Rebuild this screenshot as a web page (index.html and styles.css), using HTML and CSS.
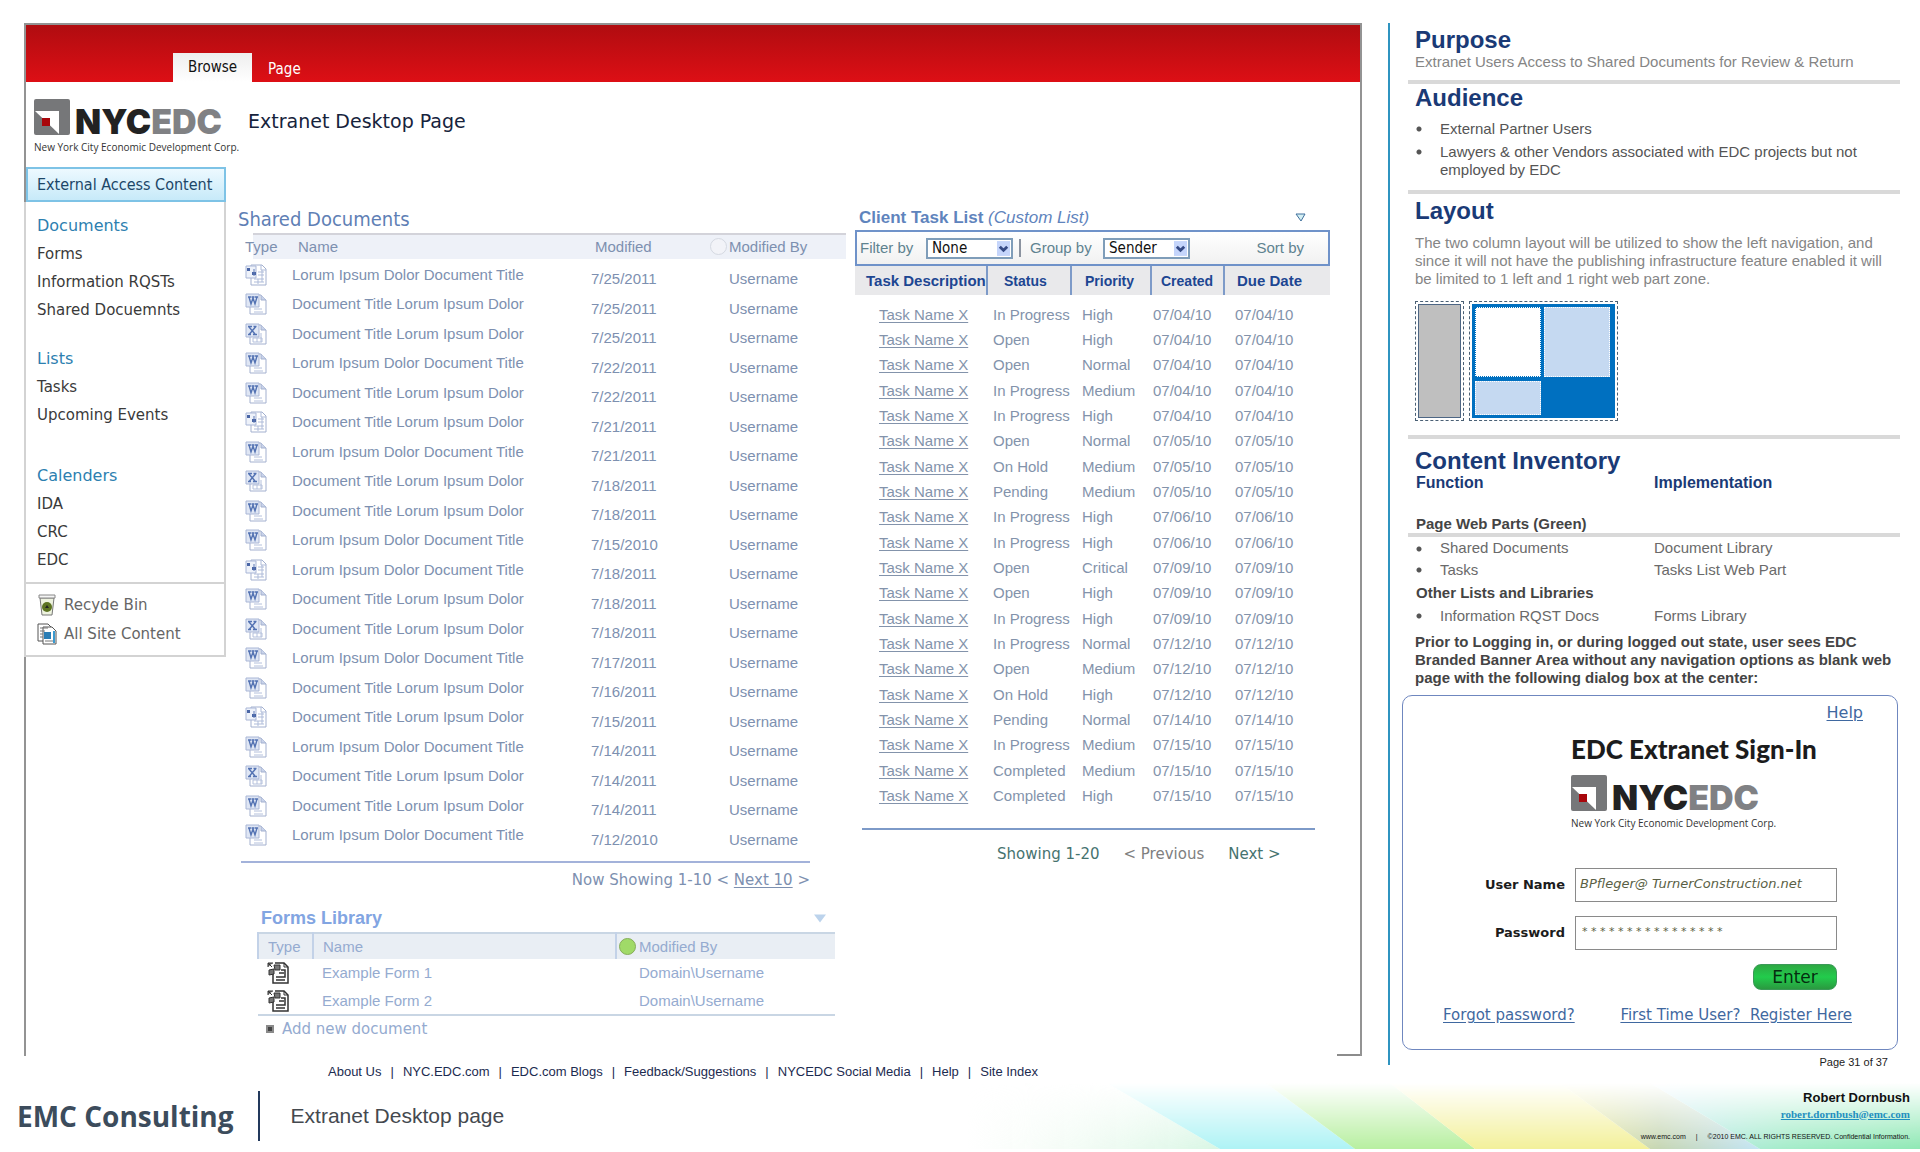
FILE: index.html
```html
<!DOCTYPE html>
<html lang="en">
<head>
<meta charset="utf-8">
<title>Extranet Desktop Page</title>
<link rel="stylesheet" href="styles.css">
</head>
<body>
<svg class="sprite" aria-hidden="true">
  <symbol id="i-word" viewBox="0 0 22 22">
    <path d="M5 2h11l5 5v14H5z" fill="#fff" stroke="#a3b0cf"/><path d="M16 2v5h5" fill="#c9d3ea" stroke="#a3b0cf"/>
    <path d="M9 16h8M9 19h9" stroke="#b4c0dc"/><path d="M1 1h13v13H1z" fill="#dfe6f4" stroke="#a9b6d6"/>
    <path d="M3 4h3M6.500 4h3M10 4h3M4 4l2 7 2-6 2 6 2-7" fill="none" stroke="#5473b3" stroke-width="1.400"/>
  </symbol>
  <symbol id="i-excel" viewBox="0 0 22 22">
    <path d="M5 2h11l5 5v14H5z" fill="#fff" stroke="#a3b0cf"/><path d="M16 2v5h5" fill="#c9d3ea" stroke="#a3b0cf"/>
    <path d="M8 15h9v4H8zM16 10v9M12 15v4" fill="none" stroke="#b4c0dc"/><path d="M1 1h13v13H1z" fill="#dfe6f4" stroke="#a9b6d6"/>
    <path d="M3 3.500h4M8.500 3.500h3M3 11.500h3M8 11.500h4M4 4l6 7M10.500 4l-6 7" fill="none" stroke="#5473b3" stroke-width="1.400"/>
  </symbol>
  <symbol id="i-info" viewBox="0 0 22 22">
    <path d="M6 1h11l4 4v16H6z" fill="#fff" stroke="#a3b0cf"/><path d="M16 1v5h5M13 8h6M13 11h6M9 15h10M9 18h10M13 15v5M17 6v12" fill="none" stroke="#aebbd9"/>
    <path d="M1 2h10v12H1z" fill="#eef2fa" stroke="#a9b6d6"/><path d="M2 4h3v3H2zM7 8h4v3H7z" fill="#4a66a6"/><path d="M9 5v7" stroke="#5d78b5"/>
  </symbol>
  <symbol id="i-form" viewBox="0 0 22 22">
    <path d="M8 1h9l4 4v16H6V12" fill="#fff" stroke="#333" stroke-width="1.500"/><path d="M17 1v4h4" fill="none" stroke="#333"/>
    <path d="M9 18h9M9 15h9V8h-4M12 11h5" fill="none" stroke="#333" stroke-width="1.500"/>
    <path d="M1 5V1h5M1 1l4 4M2 8l5-1v5l-5 1zM7 3h6v5H8z" fill="#777" stroke="#333"/>
  </symbol>
  <symbol id="i-logo" viewBox="0 0 36 36">
    <path d="M0 2Q0 0 2 0H34Q36 0 36 2V34Q36 36 34 36H2Q0 36 0 34Z" fill="#767779"/>
    <path d="M1 12H25V35Z" fill="#fff"/><path d="M8 19h8v8H8z" fill="#a8060b"/>
  </symbol>
</svg>

<div class="board">
  <div class="left">
    <div class="frame">
      <header class="ribbon"><a class="tab active" href="#">Browse</a><a class="tab" href="#">Page</a></header>
      <div class="masthead">
        <div class="logo">
          <div class="logo-top"><svg class="mark"><use href="#i-logo"/></svg><span class="word">NYC<span>EDC</span></span></div>
          <div class="tagline">New York City Economic Development Corp.</div>
        </div>
        <h1>Extranet Desktop Page</h1>
      </div>
      <div class="columns">
        <nav class="sidebar">
          <a class="current" href="#">External Access Content</a>
          <div class="groups">
            <h3>Documents</h3>
            <ul><li><a href="#">Forms</a></li><li><a href="#">Information RQSTs</a></li><li><a href="#">Shared Docuemnts</a></li></ul>
            <h3>Lists</h3>
            <ul class="short"><li><a href="#">Tasks</a></li><li><a href="#">Upcoming Events</a></li></ul>
            <h3>Calenders</h3>
            <ul><li><a href="#">IDA</a></li><li><a href="#">CRC</a></li><li><a href="#">EDC</a></li></ul>
          </div>
          <div class="tools">
            <a href="#"><svg class="tool" viewBox="0 0 20 22"><path d="M3 4h14l-2 17H5z" fill="#eef3df" stroke="#777"/><path d="M2 1h16v3H2z" fill="#f5f5f5" stroke="#888"/><circle cx="10" cy="13" r="5" fill="#5d7422"/><path d="M8 14l2-3 2 3z" fill="#222"/></svg>Recyde Bin</a>
            <a href="#"><svg class="tool" viewBox="0 0 20 22"><path d="M1 1h10l3 3v14H1z" fill="#fff" stroke="#555"/><path d="M6 4h9l4 4v13H6z" fill="#fff" stroke="#555"/><path d="M3 5h8M3 8h5M3 11h3M3 14h3M8 18h8" stroke="#777"/><path d="M7 9h7v7H7z" fill="#2b7db4"/><path d="M17 8v12" stroke="#3a9ad0" stroke-width="2"/></svg>All Site Content</a>
          </div>
        </nav>

        <div class="documents">
          <section>
            <h2>Shared Documents</h2>
            <table class="docs">
              <thead><tr><th>Type</th><th>Name</th><th>Modified<span class="dot"></span></th><th>Modified By</th></tr></thead>
              <tbody>
                <tr><td><svg><use href="#i-info"/></svg></td><td>Lorum Ipsum Dolor Document Title</td><td>7/25/2011</td><td>Username</td></tr>
                <tr><td><svg><use href="#i-word"/></svg></td><td>Document Title Lorum Ipsum Dolor</td><td>7/25/2011</td><td>Username</td></tr>
                <tr><td><svg><use href="#i-excel"/></svg></td><td>Document Title Lorum Ipsum Dolor</td><td>7/25/2011</td><td>Username</td></tr>
                <tr><td><svg><use href="#i-word"/></svg></td><td>Lorum Ipsum Dolor Document Title</td><td>7/22/2011</td><td>Username</td></tr>
                <tr><td><svg><use href="#i-word"/></svg></td><td>Document Title Lorum Ipsum Dolor</td><td>7/22/2011</td><td>Username</td></tr>
                <tr><td><svg><use href="#i-info"/></svg></td><td>Document Title Lorum Ipsum Dolor</td><td>7/21/2011</td><td>Username</td></tr>
                <tr><td><svg><use href="#i-word"/></svg></td><td>Lorum Ipsum Dolor Document Title</td><td>7/21/2011</td><td>Username</td></tr>
                <tr><td><svg><use href="#i-excel"/></svg></td><td>Document Title Lorum Ipsum Dolor</td><td>7/18/2011</td><td>Username</td></tr>
                <tr><td><svg><use href="#i-word"/></svg></td><td>Document Title Lorum Ipsum Dolor</td><td>7/18/2011</td><td>Username</td></tr>
                <tr><td><svg><use href="#i-word"/></svg></td><td>Lorum Ipsum Dolor Document Title</td><td>7/15/2010</td><td>Username</td></tr>
                <tr><td><svg><use href="#i-info"/></svg></td><td>Lorum Ipsum Dolor Document Title</td><td>7/18/2011</td><td>Username</td></tr>
                <tr><td><svg><use href="#i-word"/></svg></td><td>Document Title Lorum Ipsum Dolor</td><td>7/18/2011</td><td>Username</td></tr>
                <tr><td><svg><use href="#i-excel"/></svg></td><td>Document Title Lorum Ipsum Dolor</td><td>7/18/2011</td><td>Username</td></tr>
                <tr><td><svg><use href="#i-word"/></svg></td><td>Lorum Ipsum Dolor Document Title</td><td>7/17/2011</td><td>Username</td></tr>
                <tr><td><svg><use href="#i-word"/></svg></td><td>Document Title Lorum Ipsum Dolor</td><td>7/16/2011</td><td>Username</td></tr>
                <tr><td><svg><use href="#i-info"/></svg></td><td>Document Title Lorum Ipsum Dolor</td><td>7/15/2011</td><td>Username</td></tr>
                <tr><td><svg><use href="#i-word"/></svg></td><td>Lorum Ipsum Dolor Document Title</td><td>7/14/2011</td><td>Username</td></tr>
                <tr><td><svg><use href="#i-excel"/></svg></td><td>Document Title Lorum Ipsum Dolor</td><td>7/14/2011</td><td>Username</td></tr>
                <tr><td><svg><use href="#i-word"/></svg></td><td>Document Title Lorum Ipsum Dolor</td><td>7/14/2011</td><td>Username</td></tr>
                <tr><td><svg><use href="#i-word"/></svg></td><td>Lorum Ipsum Dolor Document Title</td><td>7/12/2010</td><td>Username</td></tr>
              </tbody>
            </table>
            <div class="docs-pager">Now Showing 1-10 &lt; <a href="#">Next 10</a> &gt;</div>
          </section>
          <section class="forms">
            <h2>Forms Library<svg class="caret" viewBox="0 0 12 8"><path d="M0 0h12L6 8z" fill="#bcd3ec"/></svg></h2>
            <table>
              <thead><tr><th>Type</th><th>Name</th><th><span class="status"></span>Modified By</th></tr></thead>
              <tbody>
                <tr><td><svg><use href="#i-form"/></svg></td><td>Example Form 1</td><td>Domain\Username</td></tr>
                <tr><td><svg><use href="#i-form"/></svg></td><td>Example Form 2</td><td>Domain\Username</td></tr>
              </tbody>
            </table>
            <a class="add" href="#"><svg viewBox="0 0 8 8"><path d="M0 0h8v8H0z" fill="#8a8a8a"/><path d="M2 2h4v4H2z" fill="#444"/></svg>Add new document</a>
          </section>
        </div>

        <section class="tasks">
          <h2>Client Task List <em>(Custom List)</em><svg class="caret" viewBox="0 0 12 9"><path d="M1 1h9L6 8z" fill="#d5f0f4" stroke="#3f6f9c"/></svg></h2>
          <div class="filters">
            <label for="filter">Filter by</label>
            <span class="pick"><select id="filter"><option>None</option></select><svg viewBox="0 0 14 16"><path d="M0 0h14v16H0z" fill="#c5d5fb"/><path d="M3 6l4 4 4-4" fill="none" stroke="#354a85" stroke-width="3"/></svg></span>
            <label class="group" for="group">Group by</label>
            <span class="pick"><select id="group"><option>Sender</option></select><svg viewBox="0 0 14 16"><path d="M0 0h14v16H0z" fill="#c5d5fb"/><path d="M3 6l4 4 4-4" fill="none" stroke="#354a85" stroke-width="3"/></svg></span>
            <span class="sort">Sort by</span>
          </div>
          <table>
            <thead><tr><th>Task Description</th><th>Status</th><th>Priority</th><th>Created</th><th>Due Date</th></tr></thead>
            <tbody>
              <tr><td><a href="#">Task Name X</a></td><td>In Progress</td><td>High</td><td>07/04/10</td><td>07/04/10</td></tr>
              <tr><td><a href="#">Task Name X</a></td><td>Open</td><td>High</td><td>07/04/10</td><td>07/04/10</td></tr>
              <tr><td><a href="#">Task Name X</a></td><td>Open</td><td>Normal</td><td>07/04/10</td><td>07/04/10</td></tr>
              <tr><td><a href="#">Task Name X</a></td><td>In Progress</td><td>Medium</td><td>07/04/10</td><td>07/04/10</td></tr>
              <tr><td><a href="#">Task Name X</a></td><td>In Progress</td><td>High</td><td>07/04/10</td><td>07/04/10</td></tr>
              <tr><td><a href="#">Task Name X</a></td><td>Open</td><td>Normal</td><td>07/05/10</td><td>07/05/10</td></tr>
              <tr><td><a href="#">Task Name X</a></td><td>On Hold</td><td>Medium</td><td>07/05/10</td><td>07/05/10</td></tr>
              <tr><td><a href="#">Task Name X</a></td><td>Pending</td><td>Medium</td><td>07/05/10</td><td>07/05/10</td></tr>
              <tr><td><a href="#">Task Name X</a></td><td>In Progress</td><td>High</td><td>07/06/10</td><td>07/06/10</td></tr>
              <tr><td><a href="#">Task Name X</a></td><td>In Progress</td><td>High</td><td>07/06/10</td><td>07/06/10</td></tr>
              <tr><td><a href="#">Task Name X</a></td><td>Open</td><td>Critical</td><td>07/09/10</td><td>07/09/10</td></tr>
              <tr><td><a href="#">Task Name X</a></td><td>Open</td><td>High</td><td>07/09/10</td><td>07/09/10</td></tr>
              <tr><td><a href="#">Task Name X</a></td><td>In Progress</td><td>High</td><td>07/09/10</td><td>07/09/10</td></tr>
              <tr><td><a href="#">Task Name X</a></td><td>In Progress</td><td>Normal</td><td>07/12/10</td><td>07/12/10</td></tr>
              <tr><td><a href="#">Task Name X</a></td><td>Open</td><td>Medium</td><td>07/12/10</td><td>07/12/10</td></tr>
              <tr><td><a href="#">Task Name X</a></td><td>On Hold</td><td>High</td><td>07/12/10</td><td>07/12/10</td></tr>
              <tr><td><a href="#">Task Name X</a></td><td>Pending</td><td>Normal</td><td>07/14/10</td><td>07/14/10</td></tr>
              <tr><td><a href="#">Task Name X</a></td><td>In Progress</td><td>Medium</td><td>07/15/10</td><td>07/15/10</td></tr>
              <tr><td><a href="#">Task Name X</a></td><td>Completed</td><td>Medium</td><td>07/15/10</td><td>07/15/10</td></tr>
              <tr><td><a href="#">Task Name X</a></td><td>Completed</td><td>High</td><td>07/15/10</td><td>07/15/10</td></tr>
            </tbody>
          </table>
          <div class="task-pager"><span>Showing 1-20</span><a class="prev" href="#">&lt; Previous</a><a href="#">Next &gt;</a></div>
        </section>
      </div>
    </div>
    <nav class="site-links"><a href="#">About Us</a><i>|</i><a href="#">NYC.EDC.com</a><i>|</i><a href="#">EDC.com Blogs</a><i>|</i><a href="#">Feedback/Suggestions</a><i>|</i><a href="#">NYCEDC Social Media</a><i>|</i><a href="#">Help</a><i>|</i><a href="#">Site Index</a></nav>
  </div>

  <aside class="notes">
    <div class="rail">
      <section class="purpose"><h2>Purpose</h2><p>Extranet Users Access to Shared Documents for Review &amp; Return</p></section>
      <section class="audience"><h2>Audience</h2>
        <ul><li>External Partner Users</li><li>Lawyers &amp; other Vendors associated with EDC projects but not employed by EDC</li></ul></section>
      <section class="layout"><h2>Layout</h2>
        <p>The two column layout will be utilized to show the left navigation, and since it will not have the publishing infrastructure feature enabled it will be limited to 1 left and 1 right web part zone.</p>
        <div class="diagram"><div class="zone narrow"><div></div></div><div class="zone wide"><div class="cells"><b class="white"></b><b></b><b></b><b class="solid"></b></div></div></div>
      </section>
      <section class="inventory"><h2>Content Inventory</h2>
        <table>
          <thead><tr><th>Function</th><th>Implementation</th></tr></thead>
          <tbody>
            <tr class="parts"><th colspan="2">Page Web Parts (Green)</th></tr>
            <tr><td class="item">Shared Documents</td><td>Document Library</td></tr>
            <tr><td class="item">Tasks</td><td>Tasks List Web Part</td></tr>
            <tr><th colspan="2">Other Lists and Libraries</th></tr>
            <tr><td class="item">Information RQST Docs</td><td>Forms Library</td></tr>
          </tbody>
        </table>
        <p>Prior to Logging in, or during logged out state, user sees EDC Branded Banner Area without any navigation options as blank web page with the following dialog box at the center:</p>
      </section>
      <form class="dialog">
        <a class="help" href="#">Help</a>
        <h2>EDC Extranet Sign-In</h2>
        <div class="logo">
          <div class="logo-top"><svg class="mark"><use href="#i-logo"/></svg><span class="word">NYC<span>EDC</span></span></div>
          <div class="tagline">New York City Economic Development Corp.</div>
        </div>
        <div class="fields">
          <label for="user">User Name</label><input id="user" class="user" type="text" value="BPfleger@ TurnerConstruction.net">
          <label for="pass">Password</label><input id="pass" class="pass" type="text" value="* * * * * * * * * * * * * * * *">
          <button type="button">Enter</button>
        </div>
        <div class="links"><a href="#">Forgot password?</a><a href="#">First Time User?&nbsp; Register Here</a></div>
      </form>
    </div>
    <div class="page-no">Page 31 of 37</div>
  </aside>
</div>

<footer class="banner">
  <svg class="wash" viewBox="0 0 960 66" preserveAspectRatio="none" aria-hidden="true">
    <defs>
      <linearGradient id="fade" x1="0" y1="0" x2="0" y2="1"><stop offset="0" stop-color="#fff" stop-opacity="0"/><stop offset="1" stop-color="#fff"/></linearGradient>
      <linearGradient id="mint"><stop offset="0" stop-color="#effaef" stop-opacity="0"/><stop offset="1" stop-color="#d8f6e4"/></linearGradient>
      <linearGradient id="teal"><stop offset="0" stop-color="#c3e9f3"/><stop offset=".5" stop-color="#a5ecca"/><stop offset="1" stop-color="#8fe8b4"/></linearGradient>
      <linearGradient id="dusk"><stop offset="0" stop-color="#edea9a"/><stop offset=".5" stop-color="#c6d6b4"/><stop offset="1" stop-color="#c3e4f4"/></linearGradient>
      <mask id="rise"><path d="M0 0h960v66H0z" fill="url(#fade)"/></mask>
    </defs>
    <g mask="url(#rise)">
      <path d="M0 0H147L260 66H0z" fill="url(#mint)"/>
      <path d="M147 0H306L395 66H260z" fill="#aef3f5"/>
      <path d="M306 0H430L515 66H395z" fill="#b7efa0"/>
      <path d="M430 0H600L690 66H515z" fill="#f3f09a"/>
      <path d="M600 0H690L800 66H690z" fill="url(#dusk)"/>
      <path d="M690 0H960V66H800z" fill="url(#teal)"/>
    </g>
  </svg>
  <div class="brand">EMC Consulting</div>
  <div class="page-name">Extranet Desktop page</div>
  <div class="contact">
    <strong>Robert Dornbush</strong>
    <a href="#">robert.dornbush@emc.com</a>
    <small><span>www.emc.com</span><span>|</span><span>©2010 EMC. ALL RIGHTS RESERVED. Confidential Information.</span></small>
  </div>
</footer>
</body>
</html>
```
FILE: styles.css
```css
* { box-sizing: border-box; }

body {
  margin: 0;
  background: #fff;
  color: #333;
  font-family: "Liberation Sans", Arial, sans-serif;
  font-size: 15px;
  line-height: 18px;
}

h1, h2, h3, p, ul { margin: 0; padding: 0; }
ul { list-style: none; }
a { color: inherit; text-decoration: none; }
table { border-collapse: collapse; table-layout: fixed; }
th, td { padding: 0; text-align: left; font-weight: normal; }
td svg { display: block; width: 22px; height: 22px; }
.sprite { position: absolute; width: 0; height: 0; }

.board {
  display: grid;
  grid-template-columns: minmax(0, 1338fr) minmax(0, 512fr);
  column-gap: 26px;
  padding: 23px 20px 0 24px;
}

/* Site mock-up */
.frame {
  min-height: 1033px;
  border: solid #939393;
  border-width: 2px 2px 0 2px;
  background: linear-gradient(#8c8c8c, #8c8c8c) right bottom / 23px 2px no-repeat;
}
.ribbon {
  display: flex;
  align-items: flex-end;
  height: 57px;
  padding-left: 147px;
  background: linear-gradient(#b00c10, #dd0f15);
}
.tab {
  padding: 5px 16px 4px;
  color: #fff;
  font: 15px/18px "DejaVu Sans Condensed", Tahoma, sans-serif;
}
.active { padding: 5px 15px 6px; background: linear-gradient(#eee, #fff); color: #111; }

.masthead { display: flex; gap: 11px; height: 85px; padding: 17px 0 0 8px; }
.masthead h1 { margin-top: 10px; color: #16233c; font: 19px/24px "DejaVu Sans", Verdana, sans-serif; }

.logo-top { display: flex; align-items: flex-end; gap: 5px; }
.mark { width: 36px; height: 36px; }
.word { color: #222; font: 900 34px/26px Inter, sans-serif; }
.word span { color: #808184; }
.tagline { margin-top: 5px; color: #333; font: 10px/14px "Open Sans", sans-serif; white-space: nowrap; }
.masthead .logo { width: 203px; }

.columns {
  display: grid;
  grid-template-columns: 202px minmax(0, 1fr) 475px;
  align-items: start;
  margin-left: -2px;
  padding-right: 30px;
}

.sidebar { color: #3a3a3a; font: 15px/28px "DejaVu Sans", Verdana, sans-serif; }
.current {
  display: block;
  margin-left: 2px;
  padding: 0 0 0 9px;
  border: 2px solid #7ec3e6;
  background: linear-gradient(#edf9ff, #c7eaf9);
  color: #1c4667;
  font: 16px/31px "DejaVu Sans Condensed", Tahoma, sans-serif;
}
.groups, .tools { border: solid #d3d3d3; border-width: 0 2px 2px; padding-left: 11px; }
.groups { padding-top: 10px; padding-bottom: 8px; }
.groups h3 { color: #2d7fb0; font: 16px/28px "DejaVu Sans", Verdana, sans-serif; }
.groups ul { margin-bottom: 21px; }
.groups .short { margin-bottom: 33px; }
.groups ul:last-child { margin-bottom: 0; }
.tools { padding-top: 6px; padding-bottom: 7px; background: #fff; color: #666; }
.tools a { display: flex; align-items: center; gap: 7px; height: 29px; }
.tool { width: 20px; height: 22px; }

.documents { padding: 38px 9px 0 12px; color: #7d90b0; }
.documents h2 { color: #5f7fb5; font: 20px/28px "DejaVu Sans Condensed", Tahoma, sans-serif; }

.docs { width: calc(100% - 3px); margin-left: 3px; }
.docs tr > :nth-child(1) { width: 51px; padding-left: 4px; }
.docs tr > :nth-child(2) { width: 299px; }
.docs tr > :nth-child(3) { width: 138px; }
.docs thead tr { height: 26px; background: linear-gradient(90deg, transparent 12px, #eef1f8 12px); }
.docs th { background: linear-gradient(#d3d3da, #d3d3da) 0 0 / 100% 2px no-repeat; padding-top: 2px; }
.docs th:first-child { background-position: 12px 0; }
.docs th:nth-child(2) { padding-left: 6px; }
.docs th:nth-child(3) { padding-left: 4px; }
.docs tbody tr { height: 30px; }
.docs tbody tr:nth-child(even) { height: 29px; }
.docs td { padding-top: 1px; }
.docs td:nth-child(n+3) { padding-top: 10px; }
.dot { float: right; width: 17px; height: 17px; margin-right: 2px; border: 1px solid #d5d9e2; border-radius: 50%; background: #f2f3f8; }
.docs-pager {
  margin: 12px 36px 0 3px;
  padding-top: 8px;
  border-top: 2px solid #a3b2da;
  font: 15px/18px "DejaVu Sans", Verdana, sans-serif;
  text-align: right;
}
.docs-pager a, .tasks td a { text-decoration: underline; text-underline-offset: 2px; }

.forms { margin: 17px 11px 0 19px; color: #95abd0; }
.forms h2 { display: flex; justify-content: space-between; align-items: center; padding: 0 9px 2px 4px; color: #82a5e2; font: bold 18px/24px "Liberation Sans", Arial, sans-serif; }
.caret { width: 12px; height: 9px; }
.forms table { width: 100%; border: solid #c9d6e4; border-width: 2px 0; }
.forms thead tr { height: 26px; background: #e9eef4; }
.forms tbody tr { height: 28px; }
.forms tr > :nth-child(1) { width: 55px; padding-left: 9px; }
.forms tr > :nth-child(2) { width: 303px; padding-left: 9px; }
.forms tr > :nth-child(3) { padding-left: 23px; }
.forms th { border-left: 2px solid #c3d2e8; }
.forms tr > th:nth-child(3) { padding-left: 2px; }
.status { float: left; width: 17px; height: 17px; margin-right: 3px; border: 1px solid #86ad5a; border-radius: 50%; background: #a0da68; }
.add { display: flex; align-items: center; gap: 8px; padding: 4px 0 0 9px; font: 15px/18px "DejaVu Sans", Verdana, sans-serif; }
.add svg { width: 8px; height: 8px; }

.tasks { padding-top: 38px; color: #8393ab; }
.tasks h2 { display: flex; align-items: center; padding: 0 23px 0 4px; color: #5f84bd; font-size: 17px; line-height: 25px; white-space: pre; }
.tasks h2 em { font-weight: normal; }
.tasks .caret { margin-left: auto; }
.filters {
  display: flex;
  align-items: center;
  height: 36px;
  padding: 0 24px 0 3px;
  border: 2px solid #6f92c9;
  background: linear-gradient(#fff, #f1f1f1);
  color: #5f8390;
}
.filters label { width: 66px; }
.filters .group { width: 84px; margin-left: 6px; padding-left: 9px; border-left: 2px solid #8b93a0; }
.pick { position: relative; width: 87px; height: 21px; }
.pick select {
  appearance: none;
  width: 100%;
  height: 100%;
  padding: 0 16px 0 4px;
  border: 2px solid #7f9db9;
  border-radius: 0;
  background: #fff;
  color: #111;
  font: 15px/17px "DejaVu Sans Condensed", Tahoma, sans-serif;
}
.pick svg { position: absolute; top: 3px; right: 3px; width: 13px; height: 15px; pointer-events: none; }
.sort { margin-left: auto; }
.tasks table { width: 100%; }
.tasks thead tr { height: 29px; background: #e9e9eb; }
.tasks tbody::before { content: ""; display: block; height: 7px; }
.tasks tbody tr { height: 25px; }
.tasks tbody tr:nth-child(3n) { height: 26px; }
.tasks tr > :nth-child(1) { width: 132px; padding-left: 24px; }
.tasks tr > :nth-child(2) { width: 84px; padding-left: 6px; }
.tasks tr > :nth-child(3) { width: 80px; padding-left: 11px; }
.tasks tr > :nth-child(4) { width: 73px; padding-left: 2px; }
.tasks tr > :nth-child(5) { padding-left: 11px; }
.tasks thead th { color: #1d4692; font: bold 14px/18px "Liberation Sans", Arial, sans-serif; }
.tasks thead tr > th:nth-child(1) { padding-left: 11px; font-size: 15px; }
.tasks thead tr > th:nth-child(2) { padding-left: 16px; }
.tasks thead tr > th:nth-child(3) { padding-left: 13px; }
.tasks thead tr > th:nth-child(4) { padding-left: 9px; }
.tasks thead tr > th:nth-child(5) { padding-left: 12px; font-size: 15px; }
.tasks thead th + th { border-left: 2px solid #7d9ac8; }
.task-pager {
  display: flex;
  gap: 24px;
  margin: 20px 15px 0 7px;
  padding: 15px 0 0 135px;
  border-top: 2px solid #7d9ac8;
  color: #46736f;
  font: 15px/18px "DejaVu Sans", Verdana, sans-serif;
  white-space: nowrap;
}
.prev { color: #808080; }

.site-links { display: flex; gap: 9px; padding: 7px 0 0 304px; color: #1c2b50; font-size: 13px; white-space: nowrap; }
.site-links i { font-style: normal; }

/* Annotations */
.rail { padding: 4px 0 15px 18px; border-left: 2px solid #2f94c0; }
.notes h2 { color: #1a3a76; font-size: 24px; line-height: 26px; }
.notes section { padding-left: 7px; border-bottom: 4px solid #d9d9d9; }
.purpose p, .layout p { color: #858585; }
.notes .purpose { padding-bottom: 9px; }
.notes .audience { padding-top: 1px; padding-bottom: 11px; color: #555; }
.audience ul { margin-top: 9px; }
.audience li { padding: 0 24px 0 25px; background: radial-gradient(circle, #555 2px, transparent 3px) 0 5px / 8px 8px no-repeat; }
.audience li + li { margin-top: 5px; }
.notes .layout { padding-top: 4px; padding-bottom: 14px; }
.layout p { margin: 10px 8px 13px 0; }
.diagram { display: flex; gap: 5px; }
.zone { height: 120px; padding: 2px; border: 1px dashed #4a6075; }
.zone > div { height: 100%; border: 1px solid #4d6684; }
.narrow { width: 49px; }
.narrow > div { background: #bfbfbf; }
.wide { width: 149px; }
.zone > .cells { display: grid; grid-template: 70px 34px / 66px 66px; gap: 4px 3px; padding: 3px; border-width: 0; background: #0070c0; }
.cells b { background: #c5d9f1; outline: 1px dotted #fff; outline-offset: -1px; }
.cells .white { background: #fff; outline-color: #0070c0; }
.cells .solid { background: #0070c0; outline: 0; }
.notes .inventory { padding-top: 9px; border: 0; color: #6a6a6a; }
.inventory table { width: calc(100% + 7px); margin-left: -7px; }
.inventory tr > :first-child { width: 246px; padding-left: 8px; }
.inventory th { color: #444; font-weight: bold; }
.inventory tr > .item { padding-left: 32px; background: radial-gradient(circle, #555 2px, transparent 3px) 7px 8px / 8px 8px no-repeat; }
.inventory thead th { color: #1a3a76; font-size: 16px; line-height: 18px; }
.inventory tbody tr { height: 23px; }
.inventory tbody .parts { height: 43px; }
.inventory .parts th { border-bottom: 4px solid #d9d9d9; vertical-align: bottom; }
.inventory p { margin-top: 6px; color: #444; font-weight: bold; }

.dialog { height: 355px; margin: 8px 2px 0 -6px; padding-top: 8px; border: 1px solid #6f87bf; border-radius: 10px; }
.dialog a { color: #3f68a0; text-decoration: underline; text-underline-offset: 2px; font: 15px/18px "DejaVu Sans", Verdana, sans-serif; }
.dialog .help { display: block; padding-right: 34px; font-size: 16px; text-align: right; }
.dialog h2 { margin: 12px 0 11px 168px; color: #1c1c1c; font: 900 26px/30px Lato, sans-serif; }
.dialog .logo { margin-left: 168px; }
.fields { display: grid; grid-template-columns: 162px 262px; gap: 14px 10px; align-items: center; margin-top: 38px; }
.fields label { color: #1c1c1c; font: bold 13px/18px "DejaVu Sans", Verdana, sans-serif; text-align: right; }
.fields input { height: 34px; padding: 0 4px; border: 1px solid #8a8a8a; background: #fff; color: #5a5f45; font: 13px/18px "DejaVu Sans", Verdana, sans-serif; }
.fields .user { padding-bottom: 3px; font-style: italic; }
.fields .pass { padding: 0 6px 4px; font-size: 11px; }
.fields button {
  grid-column: 2;
  justify-self: end;
  width: 84px;
  height: 26px;
  padding: 0;
  border: 1px solid #3b9a58;
  border-radius: 8px;
  background: linear-gradient(#2ea843, #22cc4c 50%, #2a9a40);
  color: #062c10;
  font: 17px/22px "DejaVu Sans", Verdana, sans-serif;
}
.links { display: flex; justify-content: space-between; padding: 16px 45px 0 40px; }
.page-no { margin-top: -12px; padding-right: 12px; color: #222; font-size: 11px; line-height: 18px; text-align: right; }

/* Slide footer */
.banner { position: relative; display: flex; align-items: center; height: 70px; padding: 0 10px 0 17px; }
.wash { position: absolute; right: 0; bottom: 2px; width: 50%; height: 66px; z-index: -1; }
.brand { padding-right: 24px; border-right: 2px solid #23395c; color: #3c4c5c; font: bold 28px/50px "Open Sans", sans-serif; white-space: nowrap; }
.page-name { padding-left: 31px; color: #44494f; font-size: 21px; line-height: 28px; }
.contact { display: flex; flex-direction: column; align-items: flex-end; margin-left: auto; color: #111; font-size: 13px; line-height: 16px; }
.contact a { color: #1f8fc0; text-decoration: underline; font: bold 11px/16px "Liberation Serif", serif; }
.contact small { display: flex; gap: 10px; margin-top: 9px; font-size: 7px; line-height: 12px; }
```
